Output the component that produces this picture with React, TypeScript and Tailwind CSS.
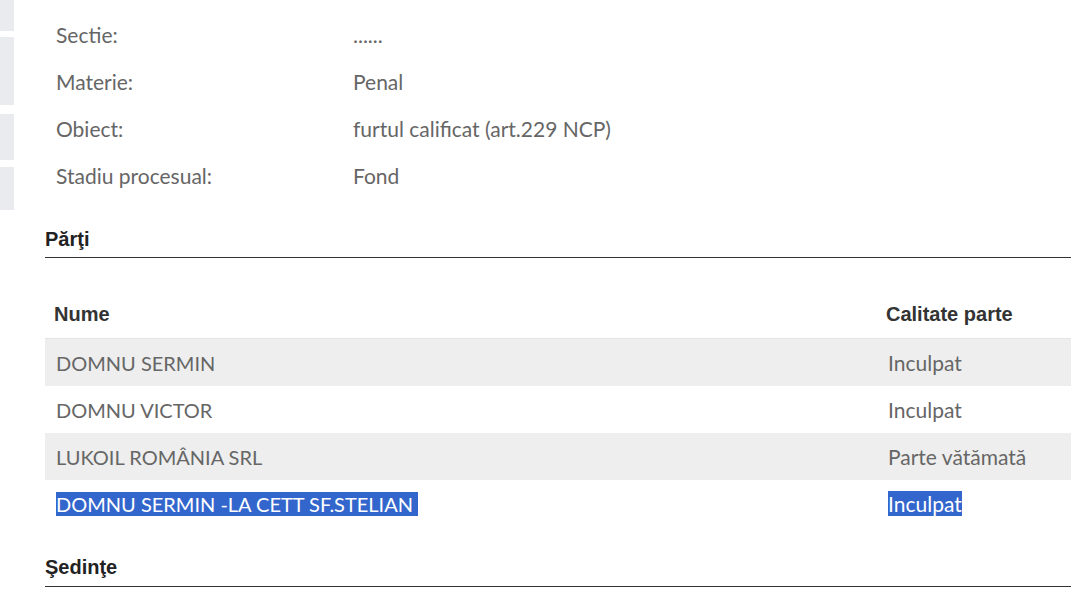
import React from "react";

const details = [
  { label: "Sectie:", value: "......" },
  { label: "Materie:", value: "Penal" },
  { label: "Obiect:", value: "furtul calificat (art.229 NCP)" },
  { label: "Stadiu procesual:", value: "Fond" },
];

const parti = [
  { nume: "DOMNU SERMIN", calitate: "Inculpat" },
  { nume: "DOMNU VICTOR", calitate: "Inculpat" },
  { nume: "LUKOIL ROMÂNIA SRL", calitate: "Parte vătămată" },
  { nume: "DOMNU SERMIN -LA CETT SF.STELIAN ", calitate: "Inculpat", selected: true },
];

const bodyFont = { fontFamily: "Lato, 'Open Sans', sans-serif" };
const headFont = { fontFamily: "'Liberation Sans', Arial, sans-serif" };

export default function App() {
  return (
    <div className="flex w-[1071px] h-[605px] overflow-hidden bg-white">
      {/* left nav stub */}
      <div className="w-[14px] flex flex-col shrink-0">
        <div className="h-[31px] bg-[#e9ebef]" />
        <div className="h-[68px] mt-[6px] bg-[#e9ebef]" />
        <div className="h-[46px] mt-[9px] bg-[#e9ebef]" />
        <div className="h-[43px] mt-[7px] bg-[#e9ebef]" />
      </div>

      <div className="flex-1 pl-[31px] pt-[11px]" style={bodyFont}>
        <div className="flex flex-col">
          {details.map((d) => (
            <div key={d.label} className="h-[47px] flex items-center text-[21px] text-[#666]">
              <div className="w-[308px] pl-[11px]">{d.label}</div>
              <div>{d.value}</div>
            </div>
          ))}
        </div>

        <h2
          className="mt-[29px] pb-[6px] border-b border-[#333] text-[20px] leading-[23px] font-bold text-[#222]"
          style={headFont}
        >
          Părţi
        </h2>

        <div className="mt-[32px]">
          <div
            className="grid grid-cols-[832px_1fr] h-[49px] items-center border-b border-[#e4e4e4] text-[20px] font-bold text-[#333]"
            style={headFont}
          >
            <div className="pl-[9px] pb-[1px]">Nume</div>
            <div className="pl-[9px] pb-[1px]">Calitate parte</div>
          </div>
          {parti.map((p, i) => (
            <div
              key={i}
              className={`grid grid-cols-[832px_1fr] h-[47px] items-center text-[#666] ${
                i % 2 === 0 ? "bg-[#eeeeee]" : "bg-white"
              }`}
            >
              <div className="pl-[11px] text-[20px]">
                {p.selected ? (
                  <span className="bg-[#3366cc] text-white whitespace-pre">{p.nume}</span>
                ) : (
                  p.nume
                )}
              </div>
              <div className="pl-[11px] text-[21px]">
                {p.selected ? <span className="bg-[#3366cc] text-white">{p.calitate}</span> : p.calitate}
              </div>
            </div>
          ))}
        </div>

        <h2
          className="mt-[29px] pb-[7px] border-b border-[#333] text-[20px] leading-[23px] font-bold text-[#222]"
          style={headFont}
        >
          Şedinţe
        </h2>
      </div>
    </div>
  );
}
